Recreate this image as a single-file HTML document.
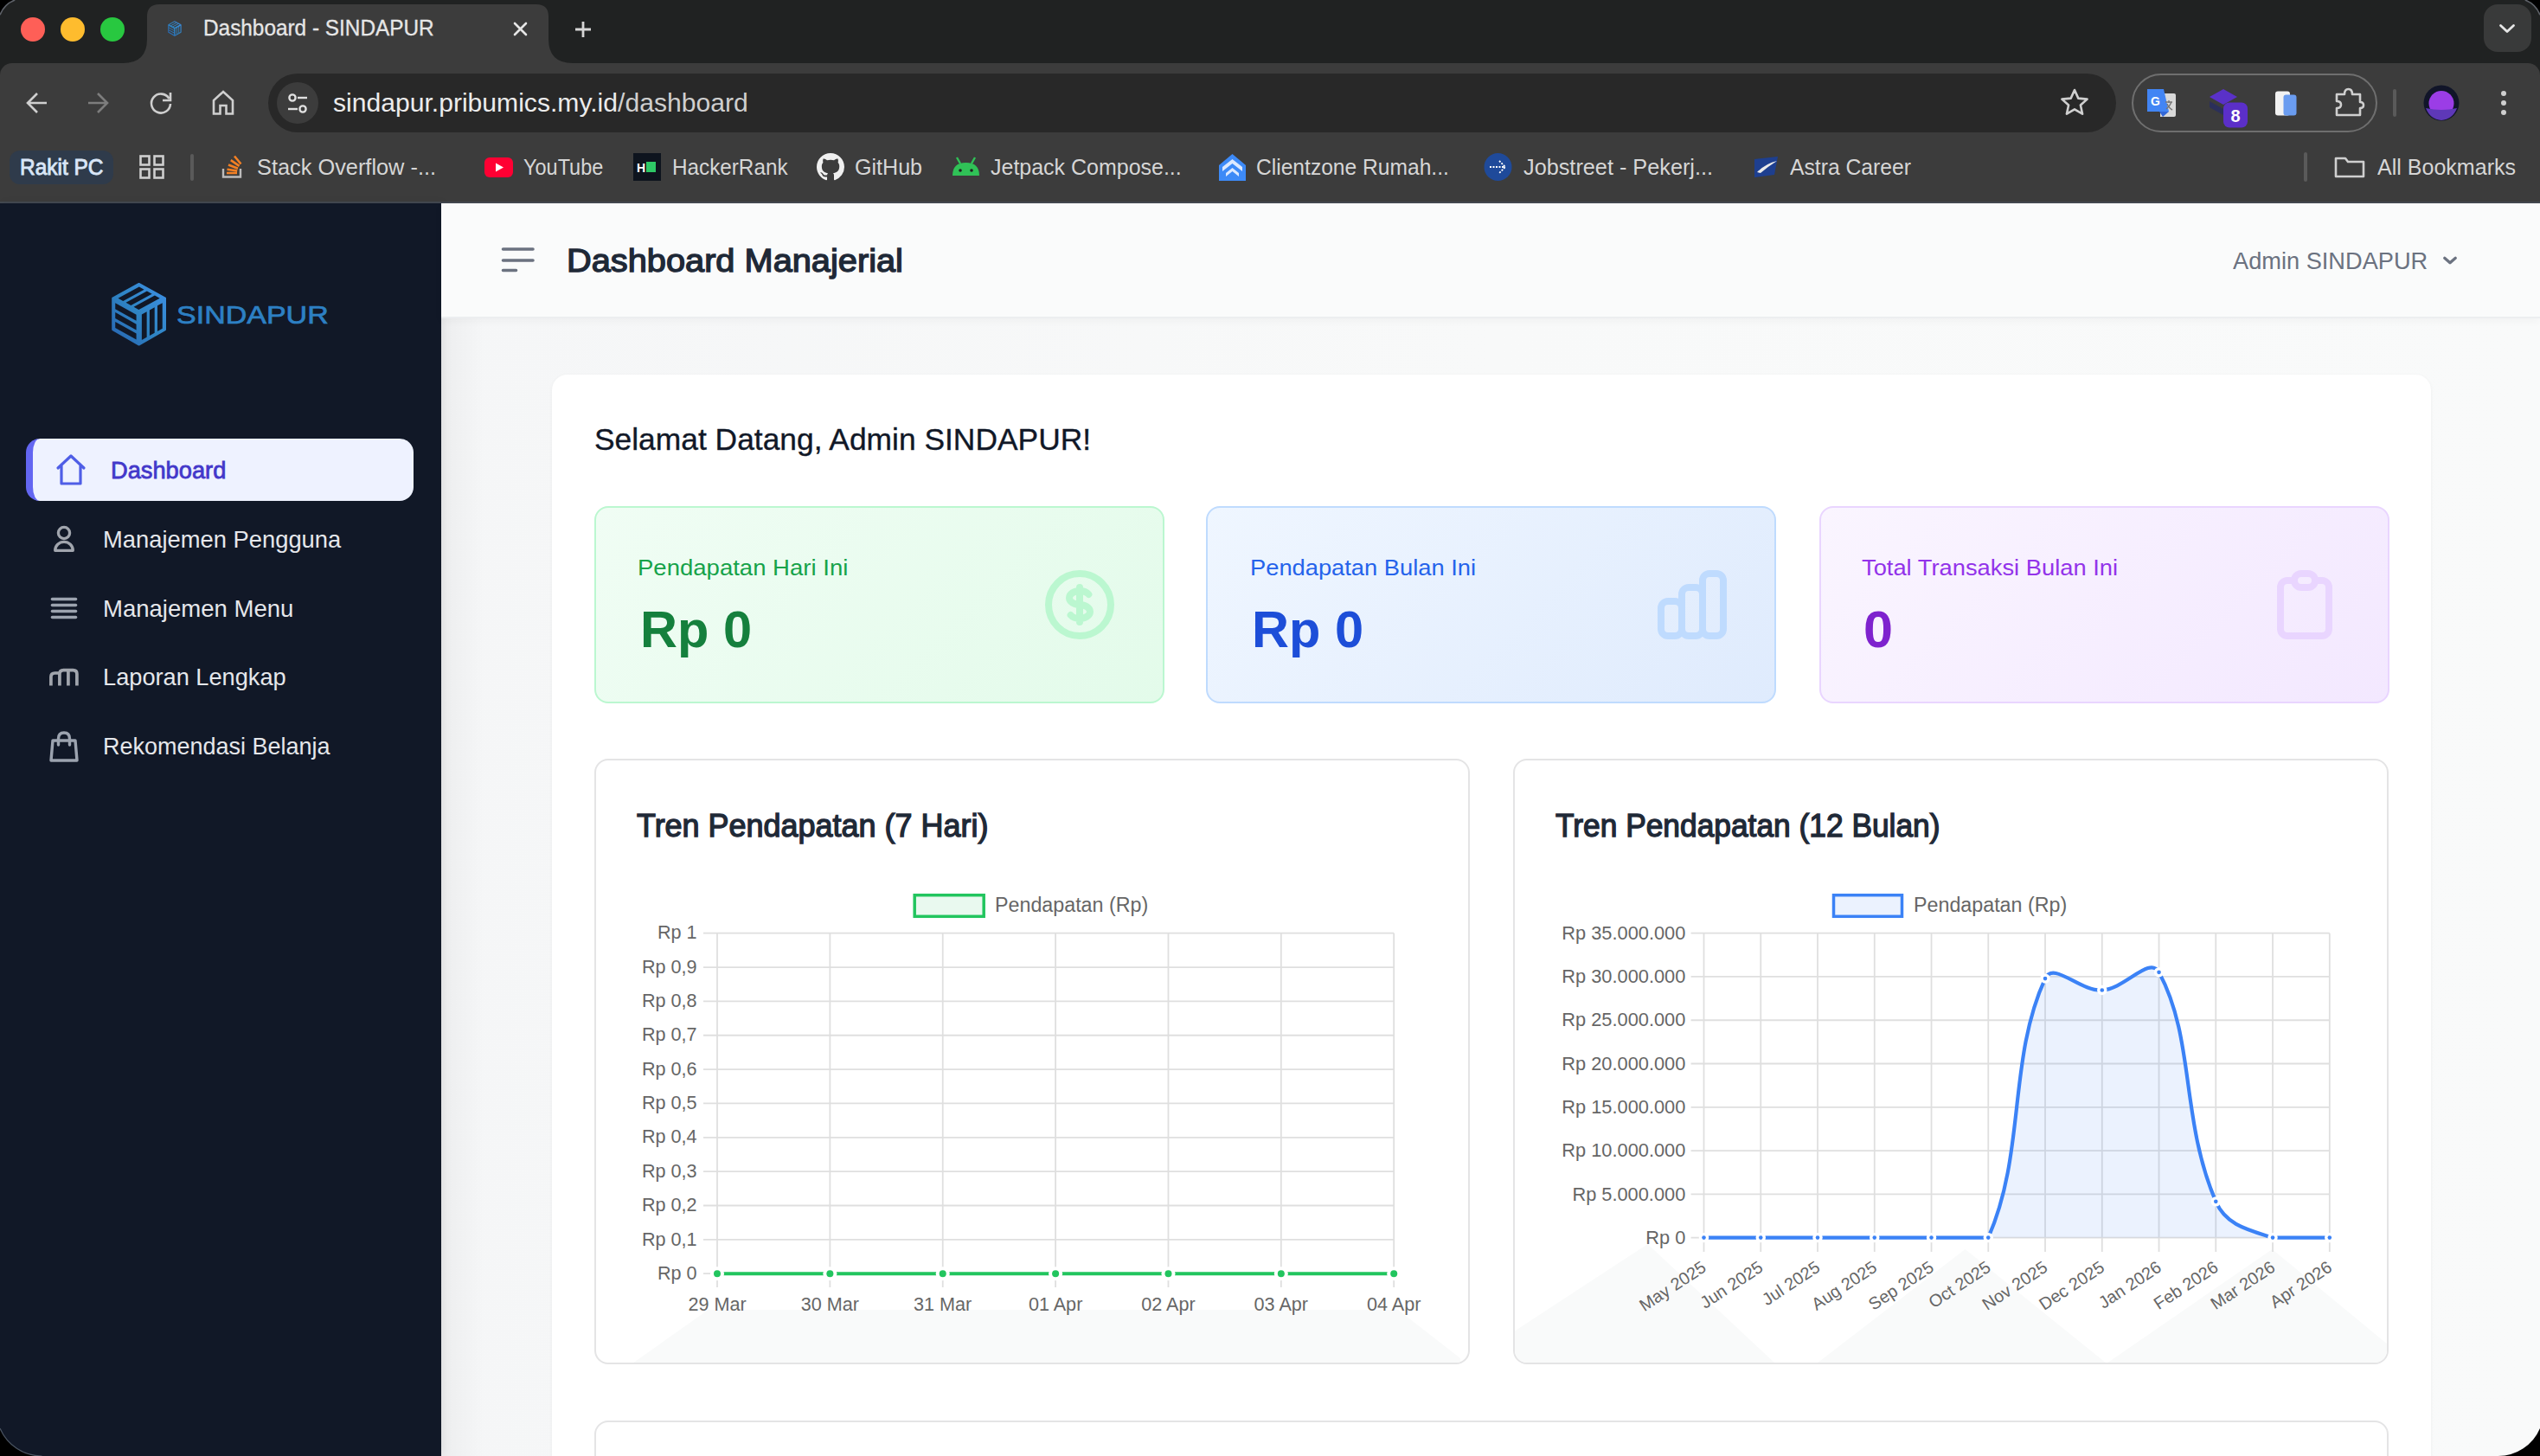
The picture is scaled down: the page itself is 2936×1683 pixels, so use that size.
<!DOCTYPE html>
<html><head><meta charset="utf-8"><title>Dashboard - SINDAPUR</title>
<style>
html,body{margin:0;padding:0;width:2936px;height:1683px;overflow:hidden;background:#000;}
#win{position:absolute;left:0;top:0;width:2936px;height:1683px;overflow:hidden;background:#202222;}
.t{position:absolute;white-space:nowrap;font-family:"Liberation Sans", sans-serif;}
.b{position:absolute;box-sizing:border-box;}
svg.b{overflow:visible;}
</style></head><body><div id="win">

<div class="b" style="left:0px;top:73px;width:2936px;height:162px;background:#3c3c3c;border-radius:14px 14px 0 0;"></div>
<div class="b" style="left:0px;top:233px;width:2936px;height:2px;background:#434850;"></div>
<svg class="b" style="left:142px;top:5px" width="520" height="68" viewBox="0 0 520 68"><path d="M0 68 Q28 68 28 40 L28 14 Q28 0 42 0 L478 0 Q492 0 492 14 L492 40 Q492 68 520 68 Z" fill="#3c3c3c"/></svg>
<div class="b" style="left:24px;top:20px;width:28px;height:28px;background:#fe5f57;border-radius:50%;"></div>
<div class="b" style="left:70px;top:20px;width:28px;height:28px;background:#febc2e;border-radius:50%;"></div>
<div class="b" style="left:116px;top:20px;width:28px;height:28px;background:#28c840;border-radius:50%;"></div>
<div class="t " style="left:235.0px;top:19.6px;font-size:25.00px;line-height:25.00px;color:#e6e6e6;-webkit-text-stroke:0.3px #e6e6e6;transform:scaleX(0.9744);transform-origin:left top;">Dashboard - SINDAPUR</div>
<svg class="b" style="left:594px;top:26px;" width="15" height="15" viewBox="0 0 15 15"><path d="M1 1 L14 14 M14 1 L1 14" stroke="#e6e6e6" stroke-width="2.6" stroke-linecap="round"/></svg>
<svg class="b" style="left:664px;top:24px;" width="20" height="20" viewBox="0 0 20 20"><path d="M10 1 V19 M1 10 H19" stroke="#d6d6d6" stroke-width="2.8"/></svg>
<div class="b" style="left:2871px;top:5px;width:55px;height:55px;background:#393a3a;border-radius:16px;"></div>
<svg class="b" style="left:2888px;top:26px;" width="20" height="14" viewBox="0 0 20 14"><path d="M2.5 3.5 L10 10.5 L17.5 3.5" stroke="#e6e6e6" stroke-width="2.8" fill="none" stroke-linecap="round" stroke-linejoin="round"/></svg>
<svg class="b" style="left:30px;top:106px;" width="25" height="26" viewBox="0 0 25 26"><path d="M24 13 H3 M13 2 L2 13 L13 24" stroke="#cfcfcf" stroke-width="2.6" fill="none"/></svg>
<svg class="b" style="left:101px;top:106px;" width="25" height="26" viewBox="0 0 25 26"><path d="M1 13 H22 M12 2 L23 13 L12 24" stroke="#7d7d7d" stroke-width="2.6" fill="none"/></svg>
<svg class="b" style="left:172px;top:105px;" width="28" height="28" viewBox="0 0 28 28"><path d="M23.5 9 A11 11 0 1 0 25 15" stroke="#cfcfcf" stroke-width="2.6" fill="none"/><path d="M25 2 V11 H16" stroke="#cfcfcf" stroke-width="2.6" fill="none"/></svg>
<svg class="b" style="left:245px;top:104px;" width="26" height="29" viewBox="0 0 26 29"><path d="M2 27.5 V12 L13 2 L24 12 V27.5 H16.5 V18 H9.5 V27.5 Z" stroke="#cfcfcf" stroke-width="2.6" fill="none" stroke-linejoin="miter"/></svg>
<div class="b" style="left:310px;top:85px;width:2136px;height:68px;background:#282828;border-radius:34px;"></div>
<div class="b" style="left:320px;top:95px;width:48px;height:48px;background:#3c3c3c;border-radius:50%;"></div>
<svg class="b" style="left:330px;top:105px;" width="28" height="28" viewBox="0 0 28 28"><circle cx="8" cy="8" r="3.6" stroke="#e0e0e0" stroke-width="2.4" fill="none"/><path d="M14 8 H25" stroke="#e0e0e0" stroke-width="2.4"/><circle cx="20" cy="21" r="3.6" stroke="#e0e0e0" stroke-width="2.4" fill="none"/><path d="M3 21 H14" stroke="#e0e0e0" stroke-width="2.4"/></svg>
<div class="t " style="left:385.0px;top:105.1px;font-size:29.00px;line-height:29.00px;color:#ececec;transform:scaleX(1.0380);transform-origin:left top;">sindapur.pribumics.my.id<span style="color:#cfcfcf">/dashboard</span></div>
<svg class="b" style="left:2381px;top:102px;" width="34" height="32" viewBox="0 0 34 32"><path d="M17 2 L21.3 11.6 L31.6 12.6 L23.9 19.5 L26.1 29.7 L17 24.4 L7.9 29.7 L10.1 19.5 L2.4 12.6 L12.7 11.6 Z" stroke="#cfcfcf" stroke-width="2.6" fill="none" stroke-linejoin="round"/></svg>
<div class="b" style="left:2464px;top:85px;width:284px;height:68px;border:2px solid #6f6f6f;border-radius:34px;"></div>
<svg class="b" style="left:2481px;top:102px;" width="35" height="34" viewBox="0 0 35 34"><path d="M16 6 H32 Q34 6 34 8 V31 Q34 33 32 33 H16 Z" fill="#d9d9d9"/><path d="M1 1 H20 L26 27 H1 Z" fill="#4285f4"/><path d="M15 27 L26 27 L19 33 Z" fill="#3367d6"/><text x="5" y="20" font-family="Liberation Sans" font-weight="700" font-size="14" fill="#fff">G</text><path d="M22 16 H30 M26 14 V17 M23 24 Q27 21 29 16 M24 18 Q26 23 30 25" stroke="#777" stroke-width="1.4" fill="none"/></svg>
<svg class="b" style="left:2552px;top:102px;" width="48" height="46" viewBox="0 0 48 46"><path d="M18 1 L34 10 L18 19 L2 10 Z" fill="#5a31c8"/><path d="M2 15 L18 24 L18 31 L2 22 Z" fill="#2b2f5a"/><rect x="18" y="16.5" width="28" height="29" rx="7" fill="#5b2fc9"/><text x="32" y="39" text-anchor="middle" font-family="Liberation Sans" font-weight="700" font-size="20" fill="#fff">8</text></svg>
<svg class="b" style="left:2628px;top:104px;" width="28" height="31" viewBox="0 0 28 31"><rect x="2" y="1.5" width="17" height="28" rx="3" fill="#f2f2f2"/><rect x="11.5" y="5.5" width="15" height="24" rx="3" fill="#6a9cf0"/></svg>
<svg class="b" style="left:2698px;top:100px;" width="36" height="35" viewBox="0 0 36 35"><path d="M3 9 H12 Q12 3 16.5 3 Q21 3 21 9 H30 V18 Q34 18 34 21.5 Q34 25 30 25 V33 H3 V25 Q8 25 8 21 Q8 17 3 17 Z" stroke="#cfcfcf" stroke-width="2.6" fill="none" stroke-linejoin="round"/></svg>
<div class="b" style="left:2766px;top:103px;width:4px;height:32px;background:#5a5a5a;border-radius:2px;"></div>
<svg class="b" style="left:2801px;top:98px;" width="42" height="42" viewBox="0 0 42 42"><circle cx="21" cy="21" r="20.5" fill="#111529"/><circle cx="21" cy="21.5" r="14.5" fill="#9b3de6"/><path d="M3 27 Q21 31 39 27 Q34 40 21 41 Q8 40 3 27 Z" fill="#5e38b8"/></svg>
<div class="b" style="left:2891px;top:104.8px;width:6.400000000000091px;height:6.400000000000006px;background:#cfcfcf;border-radius:50%;"></div>
<div class="b" style="left:2891px;top:115.8px;width:6.400000000000091px;height:6.400000000000006px;background:#cfcfcf;border-radius:50%;"></div>
<div class="b" style="left:2891px;top:126.8px;width:6.400000000000091px;height:6.3999999999999915px;background:#cfcfcf;border-radius:50%;"></div>
<div class="b" style="left:11px;top:174px;width:120px;height:39px;background:#2f3b4b;border-radius:12px;"></div>
<div class="t " style="left:22.5px;top:180.0px;font-size:26.00px;line-height:26.00px;color:#d9e6f7;-webkit-text-stroke:0.9px #d9e6f7;transform:scaleX(0.9407);transform-origin:left top;">Rakit PC</div>
<svg class="b" style="left:161px;top:179px;" width="30" height="28" viewBox="0 0 30 28"><rect x="1.5" y="1.5" width="10" height="10" fill="none" stroke="#cfcfcf" stroke-width="2.6"/><rect x="1.5" y="16.5" width="10" height="10" fill="none" stroke="#cfcfcf" stroke-width="2.6"/><rect x="17.5" y="1.5" width="10" height="10" fill="none" stroke="#cfcfcf" stroke-width="2.6"/><rect x="17.5" y="16.5" width="10" height="10" fill="none" stroke="#cfcfcf" stroke-width="2.6"/></svg>
<div class="b" style="left:220px;top:178px;width:4px;height:31px;background:#5a5a5a;border-radius:2px;"></div>
<svg class="b" style="left:256px;top:177px;" width="25" height="30" viewBox="0 0 25 30"><path d="M2 18 V27.5 H22 V18" stroke="#bcbbbb" stroke-width="2.4" fill="none"/><path d="M6 23 H18 M6.5 18.8 L18.2 20.5 M8 13.5 L19 17.8 M10.8 8.2 L20.6 14.8 M15 3.5 L22.5 12.5" stroke="#f48024" stroke-width="2.6"/></svg>
<div class="t " style="left:296.7px;top:180.0px;font-size:26.00px;line-height:26.00px;color:#d6d6d6;transform:scaleX(0.9747);transform-origin:left top;">Stack Overflow -...</div>
<svg class="b" style="left:560px;top:182px;" width="33" height="23" viewBox="0 0 33 23"><rect x="0" y="0" width="33" height="23" rx="6" fill="#ff0033"/><path d="M13 6.5 L22 11.5 L13 16.5 Z" fill="#fff"/></svg>
<div class="t " style="left:605.0px;top:180.0px;font-size:26.00px;line-height:26.00px;color:#d6d6d6;transform:scaleX(0.9034);transform-origin:left top;">YouTube</div>
<svg class="b" style="left:732px;top:177px;" width="32" height="32" viewBox="0 0 32 32"><rect width="32" height="32" fill="#0e141e"/><text x="4" y="22" font-family="Liberation Sans" font-weight="700" font-size="14" fill="#fff">H</text><rect x="15" y="10" width="11" height="12" fill="#2ec866"/></svg>
<div class="t " style="left:776.5px;top:180.0px;font-size:26.00px;line-height:26.00px;color:#d6d6d6;transform:scaleX(0.9333);transform-origin:left top;">HackerRank</div>
<svg class="b" style="left:944px;top:177px;" width="32" height="32" viewBox="0 0 16 16"><path fill="#f0f0f0" d="M8 0C3.58 0 0 3.58 0 8c0 3.54 2.29 6.53 5.47 7.59.4.07.55-.17.55-.38 0-.19-.01-.82-.01-1.49-2.01.37-2.53-.49-2.69-.94-.09-.23-.48-.94-.82-1.13-.28-.15-.68-.52-.01-.53.63-.01 1.08.58 1.23.82.72 1.21 1.87.87 2.330.66.07-.52.28-.87.51-1.07-1.78-.2-3.64-.89-3.64-3.95 0-.87.31-1.59.82-2.15-.08-.2-.36-1.02.08-2.12 0 0 .67-.21 2.2.82.64-.18 1.32-.27 2-.27.68 0 1.36.09 2 .27 1.53-1.04 2.2-.82 2.2-.82.44 1.1.16 1.92.08 2.12.51.56.82 1.27.82 2.15 0 3.07-1.87 3.75-3.65 3.95.29.25.54.73.54 1.480 0 1.07-.01 1.93-.01 2.2 0 .21.15.46.55.38A8.013 8.013 0 0016 8c0-4.42-3.58-8-8-8z"/></svg>
<div class="t " style="left:988.0px;top:180.0px;font-size:26.00px;line-height:26.00px;color:#d6d6d6;transform:scaleX(0.9640);transform-origin:left top;">GitHub</div>
<svg class="b" style="left:1100px;top:180px;" width="33" height="24" viewBox="0 0 33 24"><path d="M1 23 Q1 8 16.5 8 Q32 8 32 23 Z" fill="#30c257"/><path d="M6 2 L10 9 M27 2 L23 9" stroke="#30c257" stroke-width="2.4"/><circle cx="10" cy="17" r="1.8" fill="#202020"/><circle cx="23" cy="17" r="1.8" fill="#202020"/></svg>
<div class="t " style="left:1145.0px;top:180.0px;font-size:26.00px;line-height:26.00px;color:#d6d6d6;transform:scaleX(0.9606);transform-origin:left top;">Jetpack Compose...</div>
<svg class="b" style="left:1408px;top:176px;" width="33" height="34" viewBox="0 0 33 34"><path d="M16.5 2 L32 15 V33 H1 V15 Z" fill="#3d8af7"/><path d="M5 17 L16.5 8 L28 17 V22 L16.5 13 L5 22 Z" fill="#dce9ff"/><path d="M9 24 L16.5 18 L24 24 V28 L16.5 22 L9 28 Z" fill="#dce9ff"/></svg>
<div class="t " style="left:1452.0px;top:180.0px;font-size:26.00px;line-height:26.00px;color:#d6d6d6;transform:scaleX(0.9459);transform-origin:left top;">Clientzone Rumah...</div>
<svg class="b" style="left:1715px;top:177px;" width="33" height="32" viewBox="0 0 33 32"><circle cx="16.5" cy="16" r="16" fill="#1f4a9a"/><path d="M7 16 H25 M18 9 L25 16 L18 23" stroke="#ffffff" stroke-width="1.8" fill="none" stroke-dasharray="2 1.5"/></svg>
<div class="t " style="left:1761.0px;top:180.0px;font-size:26.00px;line-height:26.00px;color:#d6d6d6;transform:scaleX(0.9716);transform-origin:left top;">Jobstreet - Pekerj...</div>
<svg class="b" style="left:2027px;top:180px;" width="29" height="26" viewBox="0 0 29 26"><path d="M1 4 L28 1 L24 22 L1 25 Z" fill="#1e3f8f"/><path d="M4 19 Q14 9 27 6 Q16 13 8 20 Z" fill="#eaeaea"/></svg>
<div class="t " style="left:2069.0px;top:180.0px;font-size:26.00px;line-height:26.00px;color:#d6d6d6;transform:scaleX(0.9500);transform-origin:left top;">Astra Career</div>
<div class="b" style="left:2663px;top:176px;width:4px;height:34px;background:#5a5a5a;border-radius:2px;"></div>
<svg class="b" style="left:2698px;top:180px;" width="36" height="26" viewBox="0 0 36 26"><path d="M2 3 H13 L16 7 H34 V24 H2 Z" stroke="#cfcfcf" stroke-width="2.6" fill="none" stroke-linejoin="round"/></svg>
<div class="t " style="left:2748.0px;top:180.0px;font-size:26.00px;line-height:26.00px;color:#d6d6d6;transform:scaleX(0.9630);transform-origin:left top;">All Bookmarks</div>
<div class="b" style="left:510px;top:235px;width:2426px;height:1448px;background:linear-gradient(to right,#f5f6f7,#f8f9f9 50%,#f9fafa);"></div>
<div class="b" style="left:510px;top:235px;width:50px;height:1448px;background:linear-gradient(to right,rgba(0,0,0,0.035),rgba(0,0,0,0));"></div>
<div class="b" style="left:0px;top:235px;width:510px;height:1448px;background:#111827;box-shadow:3px 0 10px rgba(0,0,0,0.06);"></div>
<div class="b" style="left:510px;top:235px;width:2426px;height:133px;background:#fafbfb;border-bottom:2px solid #eceef0;box-shadow:0 3px 10px rgba(0,0,0,0.035);"></div>
<svg class="b" style="left:124px;top:322px;" width="74" height="82" viewBox="0 0 74 82"><defs><linearGradient id="lg" x1="1" y1="0" x2="0" y2="1"><stop offset="0" stop-color="#3d8fe6"/><stop offset="0.5" stop-color="#2f85c4"/><stop offset="1" stop-color="#2763b0"/></linearGradient></defs><path d="M36.6 5.9 L67 22.6 L67 59.1 L36.6 76.6 L6.2 59.1 L6.2 22.6 Z" fill="url(#lg)" stroke="url(#lg)" stroke-width="2" stroke-linejoin="round"/><path d="M12.51 22.76 L36.83 9.40 L42.60 12.63 L18.28 25.99 Z M9.24 28.22 L33.56 41.82 L33.56 48.76 L9.24 35.16 Z M39.87 41.47 L45.64 38.24 L45.64 67.84 L39.87 71.07 Z M21.55 27.82 L45.87 14.45 L51.65 17.68 L27.33 31.05 Z M9.24 39.08 L33.56 52.68 L33.56 59.62 L9.24 46.02 Z M48.91 36.42 L54.69 33.19 L54.69 62.78 L48.91 66.02 Z M30.60 32.87 L54.92 19.51 L60.69 22.74 L36.37 36.10 Z M9.24 49.94 L33.56 63.54 L33.56 70.48 L9.24 56.88 Z M57.96 31.36 L63.73 28.13 L63.73 57.73 L57.96 60.96 Z" fill="#111827"/></svg>
<svg class="b" style="left:192px;top:23px;" width="20" height="20" viewBox="0 0 74 82"><defs><linearGradient id="lg2" x1="1" y1="0" x2="0" y2="1"><stop offset="0" stop-color="#3d8fe6"/><stop offset="0.5" stop-color="#2f85c4"/><stop offset="1" stop-color="#2763b0"/></linearGradient></defs><path d="M36.6 5.9 L67 22.6 L67 59.1 L36.6 76.6 L6.2 59.1 L6.2 22.6 Z" fill="url(#lg2)" stroke="url(#lg2)" stroke-width="2" stroke-linejoin="round"/><path d="M12.51 22.76 L36.83 9.40 L42.60 12.63 L18.28 25.99 Z M9.24 28.22 L33.56 41.82 L33.56 48.76 L9.24 35.16 Z M39.87 41.47 L45.64 38.24 L45.64 67.84 L39.87 71.07 Z M21.55 27.82 L45.87 14.45 L51.65 17.68 L27.33 31.05 Z M9.24 39.08 L33.56 52.68 L33.56 59.62 L9.24 46.02 Z M48.91 36.42 L54.69 33.19 L54.69 62.78 L48.91 66.02 Z M30.60 32.87 L54.92 19.51 L60.69 22.74 L36.37 36.10 Z M9.24 49.94 L33.56 63.54 L33.56 70.48 L9.24 56.88 Z M57.96 31.36 L63.73 28.13 L63.73 57.73 L57.96 60.96 Z" fill="#3c3c3c"/></svg>
<div class="t " style="left:203.6px;top:348.3px;font-size:30.40px;line-height:30.40px;color:#2d80c4;-webkit-text-stroke:0.7px #2d80c4;transform:scaleX(1.1191);transform-origin:left top;">SINDAPUR</div>
<div class="b" style="left:30px;top:507px;width:448px;height:72px;background:#eef2ff;border-radius:16px;border-left:8px solid #6366f1;"></div>
<svg class="b" style="left:63px;top:524px;" width="38" height="38" viewBox="0 0 38 38"><path d="M4 17 L19 3 L34 17 M8 13.5 V35 H30 V13.5" stroke="#4f5ee6" stroke-width="3.2" fill="none" stroke-linejoin="round" stroke-linecap="round"/></svg>
<div class="t " style="left:127.7px;top:529.7px;font-size:28.00px;line-height:28.00px;color:#4338ca;-webkit-text-stroke:0.8px #4338ca;transform:scaleX(0.9732);transform-origin:left top;">Dashboard</div>
<div class="t " style="left:119.3px;top:609.9px;font-size:28.00px;line-height:28.00px;color:#e5e7eb;transform:scaleX(0.9768);transform-origin:left top;">Manajemen Pengguna</div>
<div class="t " style="left:119.3px;top:689.6px;font-size:28.00px;line-height:28.00px;color:#e5e7eb;transform:scaleX(0.9830);transform-origin:left top;">Manajemen Menu</div>
<div class="t " style="left:119.3px;top:769.4px;font-size:28.00px;line-height:28.00px;color:#e5e7eb;transform:scaleX(0.9713);transform-origin:left top;">Laporan Lengkap</div>
<div class="t " style="left:119.3px;top:849.2px;font-size:28.00px;line-height:28.00px;color:#e5e7eb;transform:scaleX(0.9641);transform-origin:left top;">Rekomendasi Belanja</div>
<svg class="b" style="left:60px;top:606px;" width="28" height="34" viewBox="0 0 28 34"><circle cx="14" cy="10" r="6.6" stroke="#a1a5ad" stroke-width="3.3" fill="none"/><path d="M3.7 30.3 A10.3 10 0 0 1 24.3 30.3 Z" stroke="#a1a5ad" stroke-width="3.3" fill="none" stroke-linejoin="round"/></svg>
<svg class="b" style="left:58px;top:689px;" width="32" height="28" viewBox="0 0 32 28"><path d="M2.5 3.5 H29.5" stroke="#9ca3af" stroke-width="3.6" stroke-linecap="round"/><path d="M2.5 10.5 H29.5" stroke="#9ca3af" stroke-width="3.6" stroke-linecap="round"/><path d="M2.5 17.5 H29.5" stroke="#9ca3af" stroke-width="3.6" stroke-linecap="round"/><path d="M2.5 24.5 H29.5" stroke="#9ca3af" stroke-width="3.6" stroke-linecap="round"/></svg>
<svg class="b" style="left:55px;top:771px;" width="40" height="24" viewBox="0 0 40 24"><path d="M3.9 21.4 V11.5 Q3.9 7 8.4 7 H13.9 M13.9 21.4 V8.1 Q13.9 3.6 18.4 3.6 H29.4 Q33.9 3.6 33.9 8.1 V21.4 M23.9 3.6 V21.4" stroke="#a1a5ad" stroke-width="3.7" fill="none" stroke-linecap="butt"/></svg>
<svg class="b" style="left:57px;top:845px;" width="34" height="36" viewBox="0 0 34 36"><path d="M4 11 H30 L32 34 H2 Z" stroke="#9ca3af" stroke-width="3.4" fill="none" stroke-linejoin="round"/><path d="M10.5 16 V9 Q10.5 2 17 2 Q23.5 2 23.5 9 V16" stroke="#9ca3af" stroke-width="3.4" fill="none" stroke-linecap="round"/></svg>
<svg class="b" style="left:576px;top:284px;" width="44" height="34" viewBox="0 0 44 34"><path d="M5.5 4 H40 M5.5 17 H40 M5.5 28.5 H20.5" stroke="#6b7280" stroke-width="3.6" stroke-linecap="round"/></svg>
<div class="t " style="left:655.0px;top:283.1px;font-size:37.70px;line-height:37.70px;color:#1f2937;-webkit-text-stroke:1.4px #1f2937;transform:scaleX(1.0548);transform-origin:left top;">Dashboard Manajerial</div>
<div class="t " style="left:2581.0px;top:287.5px;font-size:28.00px;line-height:28.00px;color:#6b7280;transform:scaleX(0.9714);transform-origin:left top;">Admin SINDAPUR</div>
<svg class="b" style="left:2821px;top:293px;" width="22" height="16" viewBox="0 0 22 16"><path d="M4.7 5.2 L11 10.8 L17.3 5.2" stroke="#6b7280" stroke-width="3.2" fill="none" stroke-linecap="round" stroke-linejoin="round"/></svg>
<div class="b" style="left:638px;top:433px;width:2172px;height:1290px;background:#ffffff;border-radius:18px;box-shadow:0 1px 4px rgba(0,0,0,0.05);"></div>
<div class="t " style="left:687.4px;top:491.2px;font-size:35.60px;line-height:35.60px;color:#111827;-webkit-text-stroke:0.35px #111827;transform:scaleX(0.9942);transform-origin:left top;">Selamat Datang, Admin SINDAPUR!</div>
<div class="b" style="left:687px;top:585px;width:659px;height:228px;background:linear-gradient(135deg,#f0fdf4,#e3fbea);border:2px solid #bbf7d0;border-radius:16px;"></div>
<div class="t " style="left:737.0px;top:642.6px;font-size:26.50px;line-height:26.50px;color:#16a34a;transform:scaleX(1.0387);transform-origin:left top;">Pendapatan Hari Ini</div>
<div class="t " style="left:739.6px;top:699.0px;font-size:58.50px;line-height:58.50px;color:#15803d;font-weight:700;transform:scaleX(1.0177);transform-origin:left top;">Rp 0</div>
<div class="b" style="left:1394px;top:585px;width:659px;height:228px;background:linear-gradient(135deg,#eff6ff,#dfebfd);border:2px solid #bfdbfe;border-radius:16px;"></div>
<div class="t " style="left:1445.2px;top:642.6px;font-size:26.50px;line-height:26.50px;color:#2563eb;transform:scaleX(1.0299);transform-origin:left top;">Pendapatan Bulan Ini</div>
<div class="t " style="left:1447.3px;top:699.0px;font-size:58.50px;line-height:58.50px;color:#1d4ed8;font-weight:700;transform:scaleX(1.0177);transform-origin:left top;">Rp 0</div>
<div class="b" style="left:2103px;top:585px;width:659px;height:228px;background:linear-gradient(135deg,#faf5ff,#f3e8ff);border:2px solid #e9d5ff;border-radius:16px;"></div>
<div class="t " style="left:2151.8px;top:642.6px;font-size:26.50px;line-height:26.50px;color:#9333ea;transform:scaleX(1.0306);transform-origin:left top;">Total Transaksi Bulan Ini</div>
<div class="t " style="left:2154.2px;top:699.0px;font-size:58.50px;line-height:58.50px;color:#7e22ce;font-weight:700;transform:scaleX(1.0451);transform-origin:left top;">0</div>
<svg class="b" style="left:1200px;top:650.6px;" width="96" height="96.0" viewBox="0 0 24 24"><g fill="none" stroke-width="2" stroke-linecap="round" stroke-linejoin="round" stroke="#bbf7d0"><path d="M12 8c-1.657 0-3 .895-3 2s1.343 2 3 2 3 .895 3 2-1.343 2-3 2m0-8c1.11 0 2.08.402 2.599 1M12 8V7m0 1v8m0 0v1m0-1c-1.11 0-2.08-.402-2.599-1M21 12a9 9 0 11-18 0 9 9 0 0118 0z"/></g></svg>
<svg class="b" style="left:1908px;top:651px;" width="96" height="96" viewBox="0 0 24 24"><g fill="none" stroke-width="2" stroke-linecap="round" stroke-linejoin="round" stroke="#bfdbfe"><path d="M9 19v-6a2 2 0 00-2-2H5a2 2 0 00-2 2v6a2 2 0 002 2h2a2 2 0 002-2zm0 0V9a2 2 0 012-2h2a2 2 0 012 2v10m-6 0a2 2 0 002 2h2a2 2 0 002-2m0 0V5a2 2 0 012-2h2a2 2 0 012 2v14a2 2 0 01-2 2h-2a2 2 0 01-2-2z"/></g></svg>
<svg class="b" style="left:2616px;top:651px;" width="96" height="96" viewBox="0 0 24 24"><g fill="none" stroke-width="2" stroke-linecap="round" stroke-linejoin="round" stroke="#e9d5ff"><path d="M9 5H7a2 2 0 00-2 2v12a2 2 0 002 2h10a2 2 0 002-2V7a2 2 0 00-2-2h-2M9 5a2 2 0 002 2h2a2 2 0 002-2M9 5a2 2 0 012-2h2a2 2 0 012 2"/></g></svg>
<div class="b" style="left:687px;top:877px;width:1012px;height:700px;background:#fff;border:2px solid #e4e4e5;border-radius:16px;"></div>
<div class="t " style="left:736.4px;top:936.1px;font-size:37.30px;line-height:37.30px;color:#1f2937;-webkit-text-stroke:1.4px #1f2937;transform:scaleX(0.9643);transform-origin:left top;">Tren Pendapatan (7 Hari)</div>
<div class="b" style="left:1749px;top:877px;width:1012px;height:700px;background:#fff;border:2px solid #e4e4e5;border-radius:16px;"></div>
<div class="t " style="left:1798.4px;top:936.1px;font-size:37.30px;line-height:37.30px;color:#1f2937;-webkit-text-stroke:1.4px #1f2937;transform:scaleX(0.9472);transform-origin:left top;">Tren Pendapatan (12 Bulan)</div>
<div class="b" style="left:687px;top:1642px;width:2074px;height:81px;background:#fff;border:2px solid #e4e4e5;border-radius:16px;"></div>
<svg class="b" style="left:0;top:0" width="2936" height="1683" viewBox="0 0 2936 1683"><defs><clipPath id="cc1"><rect x="689" y="879" width="1008" height="696" rx="14"/></clipPath><clipPath id="cc2"><rect x="1751" y="879" width="1008" height="696" rx="14"/></clipPath></defs><path clip-path="url(#cc1)" d="M731 1576 L818.6 1514 L1616 1514 L1688 1570 L1688 1576 Z" fill="#f9fafa"/><path clip-path="url(#cc2)" d="M1749 1576 L1749 1539.7 L1904.6 1438 L2052 1576 Z M2100 1576 L2271.5 1444 L2435 1576 Z M2435 1576 L2626.5 1444 L2762 1555.7 L2762 1576 Z" fill="#f9fafa"/></svg>
<svg class="b" style="left:0;top:0" width="2936" height="1683" viewBox="0 0 2936 1683"><path d="M813 1472.20 H1611.2" stroke="#dfdfdf" stroke-width="1.8"/><path d="M813 1432.85 H1611.2" stroke="#dfdfdf" stroke-width="1.8"/><path d="M813 1393.50 H1611.2" stroke="#dfdfdf" stroke-width="1.8"/><path d="M813 1354.15 H1611.2" stroke="#dfdfdf" stroke-width="1.8"/><path d="M813 1314.80 H1611.2" stroke="#dfdfdf" stroke-width="1.8"/><path d="M813 1275.45 H1611.2" stroke="#dfdfdf" stroke-width="1.8"/><path d="M813 1236.10 H1611.2" stroke="#dfdfdf" stroke-width="1.8"/><path d="M813 1196.75 H1611.2" stroke="#dfdfdf" stroke-width="1.8"/><path d="M813 1157.40 H1611.2" stroke="#dfdfdf" stroke-width="1.8"/><path d="M813 1118.05 H1611.2" stroke="#dfdfdf" stroke-width="1.8"/><path d="M813 1078.70 H1611.2" stroke="#dfdfdf" stroke-width="1.8"/><path d="M829.00 1078.7 V1488" stroke="#dfdfdf" stroke-width="1.8"/><path d="M959.37 1078.7 V1488" stroke="#dfdfdf" stroke-width="1.8"/><path d="M1089.73 1078.7 V1488" stroke="#dfdfdf" stroke-width="1.8"/><path d="M1220.10 1078.7 V1488" stroke="#dfdfdf" stroke-width="1.8"/><path d="M1350.47 1078.7 V1488" stroke="#dfdfdf" stroke-width="1.8"/><path d="M1480.83 1078.7 V1488" stroke="#dfdfdf" stroke-width="1.8"/><path d="M1611.20 1078.7 V1488" stroke="#dfdfdf" stroke-width="1.8"/><path d="M829 1472.2 H1611.2" stroke="#22c55e" stroke-width="4"/><circle cx="829.00" cy="1472.2" r="8" fill="#fff"/><circle cx="829.00" cy="1472.2" r="4" fill="#22c55e"/><circle cx="959.37" cy="1472.2" r="8" fill="#fff"/><circle cx="959.37" cy="1472.2" r="4" fill="#22c55e"/><circle cx="1089.73" cy="1472.2" r="8" fill="#fff"/><circle cx="1089.73" cy="1472.2" r="4" fill="#22c55e"/><circle cx="1220.10" cy="1472.2" r="8" fill="#fff"/><circle cx="1220.10" cy="1472.2" r="4" fill="#22c55e"/><circle cx="1350.47" cy="1472.2" r="8" fill="#fff"/><circle cx="1350.47" cy="1472.2" r="4" fill="#22c55e"/><circle cx="1480.83" cy="1472.2" r="8" fill="#fff"/><circle cx="1480.83" cy="1472.2" r="4" fill="#22c55e"/><circle cx="1611.20" cy="1472.2" r="8" fill="#fff"/><circle cx="1611.20" cy="1472.2" r="4" fill="#22c55e"/><rect x="1057.2" y="1034.7" width="80" height="24.6" fill="#e9f9ef" stroke="#22c55e" stroke-width="3.5"/></svg>
<div class="t " style="left:1150.4px;top:1035.2px;font-size:23.50px;line-height:23.50px;color:#666666;transform:scaleX(0.9901);transform-origin:left top;">Pendapatan (Rp)</div>
<div class="t " style="left:759.9px;top:1067.3px;font-size:21.60px;line-height:21.60px;color:#666666;">Rp 1</div>
<div class="t " style="left:741.9px;top:1106.7px;font-size:21.60px;line-height:21.60px;color:#666666;">Rp 0,9</div>
<div class="t " style="left:741.9px;top:1146.0px;font-size:21.60px;line-height:21.60px;color:#666666;">Rp 0,8</div>
<div class="t " style="left:741.9px;top:1185.4px;font-size:21.60px;line-height:21.60px;color:#666666;">Rp 0,7</div>
<div class="t " style="left:741.9px;top:1224.7px;font-size:21.60px;line-height:21.60px;color:#666666;">Rp 0,6</div>
<div class="t " style="left:741.9px;top:1264.1px;font-size:21.60px;line-height:21.60px;color:#666666;">Rp 0,5</div>
<div class="t " style="left:741.9px;top:1303.4px;font-size:21.60px;line-height:21.60px;color:#666666;">Rp 0,4</div>
<div class="t " style="left:741.9px;top:1342.8px;font-size:21.60px;line-height:21.60px;color:#666666;">Rp 0,3</div>
<div class="t " style="left:741.9px;top:1382.1px;font-size:21.60px;line-height:21.60px;color:#666666;">Rp 0,2</div>
<div class="t " style="left:741.9px;top:1421.5px;font-size:21.60px;line-height:21.60px;color:#666666;">Rp 0,1</div>
<div class="t " style="left:759.9px;top:1460.8px;font-size:21.60px;line-height:21.60px;color:#666666;">Rp 0</div>
<div class="t " style="left:795.4px;top:1496.5px;font-size:21.60px;line-height:21.60px;color:#666666;">29 Mar</div>
<div class="t " style="left:925.8px;top:1496.5px;font-size:21.60px;line-height:21.60px;color:#666666;">30 Mar</div>
<div class="t " style="left:1056.1px;top:1496.5px;font-size:21.60px;line-height:21.60px;color:#666666;">31 Mar</div>
<div class="t " style="left:1188.9px;top:1496.5px;font-size:21.60px;line-height:21.60px;color:#666666;">01 Apr</div>
<div class="t " style="left:1319.2px;top:1496.5px;font-size:21.60px;line-height:21.60px;color:#666666;">02 Apr</div>
<div class="t " style="left:1449.6px;top:1496.5px;font-size:21.60px;line-height:21.60px;color:#666666;">03 Apr</div>
<div class="t " style="left:1580.0px;top:1496.5px;font-size:21.60px;line-height:21.60px;color:#666666;">04 Apr</div>
<svg class="b" style="left:0;top:0" width="2936" height="1683" viewBox="0 0 2936 1683"><path d="M1954.6 1430.60 H2692.8" stroke="#dfdfdf" stroke-width="1.8"/><path d="M1954.6 1380.33 H2692.8" stroke="#dfdfdf" stroke-width="1.8"/><path d="M1954.6 1330.06 H2692.8" stroke="#dfdfdf" stroke-width="1.8"/><path d="M1954.6 1279.79 H2692.8" stroke="#dfdfdf" stroke-width="1.8"/><path d="M1954.6 1229.51 H2692.8" stroke="#dfdfdf" stroke-width="1.8"/><path d="M1954.6 1179.24 H2692.8" stroke="#dfdfdf" stroke-width="1.8"/><path d="M1954.6 1128.97 H2692.8" stroke="#dfdfdf" stroke-width="1.8"/><path d="M1954.6 1078.70 H2692.8" stroke="#dfdfdf" stroke-width="1.8"/><path d="M1969.50 1078.7 V1447" stroke="#dfdfdf" stroke-width="1.8"/><path d="M2035.25 1078.7 V1447" stroke="#dfdfdf" stroke-width="1.8"/><path d="M2101.01 1078.7 V1447" stroke="#dfdfdf" stroke-width="1.8"/><path d="M2166.76 1078.7 V1447" stroke="#dfdfdf" stroke-width="1.8"/><path d="M2232.52 1078.7 V1447" stroke="#dfdfdf" stroke-width="1.8"/><path d="M2298.27 1078.7 V1447" stroke="#dfdfdf" stroke-width="1.8"/><path d="M2364.03 1078.7 V1447" stroke="#dfdfdf" stroke-width="1.8"/><path d="M2429.78 1078.7 V1447" stroke="#dfdfdf" stroke-width="1.8"/><path d="M2495.54 1078.7 V1447" stroke="#dfdfdf" stroke-width="1.8"/><path d="M2561.29 1078.7 V1447" stroke="#dfdfdf" stroke-width="1.8"/><path d="M2627.05 1078.7 V1447" stroke="#dfdfdf" stroke-width="1.8"/><path d="M2692.80 1078.7 V1447" stroke="#dfdfdf" stroke-width="1.8"/><path d="M1969.50 1430.60 C1995.80 1430.60 2008.95 1430.60 2035.25 1430.60 C2061.56 1430.60 2074.71 1430.60 2101.01 1430.60 C2127.31 1430.60 2140.46 1430.60 2166.76 1430.60 C2193.07 1430.60 2206.22 1430.60 2232.52 1430.60 C2258.82 1430.60 2288.98 1430.60 2298.27 1430.60 C2341.59 1331.95 2320.87 1224.95 2364.03 1131.08 C2373.47 1110.54 2403.83 1145.98 2429.78 1144.56 C2456.44 1143.09 2484.93 1104.14 2495.54 1123.84 C2537.54 1201.87 2520.36 1293.40 2561.29 1388.87 C2572.96 1416.10 2598.52 1421.55 2627.05 1430.60 C2651.13 1430.60 2666.50 1430.60 2692.80 1430.60 L2692.8 1430.6 L1969.5 1430.6 Z" fill="rgba(59,130,246,0.1)"/><path d="M1969.50 1430.60 C1995.80 1430.60 2008.95 1430.60 2035.25 1430.60 C2061.56 1430.60 2074.71 1430.60 2101.01 1430.60 C2127.31 1430.60 2140.46 1430.60 2166.76 1430.60 C2193.07 1430.60 2206.22 1430.60 2232.52 1430.60 C2258.82 1430.60 2288.98 1430.60 2298.27 1430.60 C2341.59 1331.95 2320.87 1224.95 2364.03 1131.08 C2373.47 1110.54 2403.83 1145.98 2429.78 1144.56 C2456.44 1143.09 2484.93 1104.14 2495.54 1123.84 C2537.54 1201.87 2520.36 1293.40 2561.29 1388.87 C2572.96 1416.10 2598.52 1421.55 2627.05 1430.60 C2651.13 1430.60 2666.50 1430.60 2692.80 1430.60" stroke="#3b82f6" stroke-width="4.2" fill="none"/><circle cx="1969.50" cy="1430.60" r="5.7" fill="#fff"/><circle cx="1969.50" cy="1430.60" r="2.3" fill="#3b82f6"/><circle cx="2035.25" cy="1430.60" r="5.7" fill="#fff"/><circle cx="2035.25" cy="1430.60" r="2.3" fill="#3b82f6"/><circle cx="2101.01" cy="1430.60" r="5.7" fill="#fff"/><circle cx="2101.01" cy="1430.60" r="2.3" fill="#3b82f6"/><circle cx="2166.76" cy="1430.60" r="5.7" fill="#fff"/><circle cx="2166.76" cy="1430.60" r="2.3" fill="#3b82f6"/><circle cx="2232.52" cy="1430.60" r="5.7" fill="#fff"/><circle cx="2232.52" cy="1430.60" r="2.3" fill="#3b82f6"/><circle cx="2298.27" cy="1430.60" r="5.7" fill="#fff"/><circle cx="2298.27" cy="1430.60" r="2.3" fill="#3b82f6"/><circle cx="2364.03" cy="1131.08" r="5.7" fill="#fff"/><circle cx="2364.03" cy="1131.08" r="2.3" fill="#3b82f6"/><circle cx="2429.78" cy="1144.56" r="5.7" fill="#fff"/><circle cx="2429.78" cy="1144.56" r="2.3" fill="#3b82f6"/><circle cx="2495.54" cy="1123.84" r="5.7" fill="#fff"/><circle cx="2495.54" cy="1123.84" r="2.3" fill="#3b82f6"/><circle cx="2561.29" cy="1388.87" r="5.7" fill="#fff"/><circle cx="2561.29" cy="1388.87" r="2.3" fill="#3b82f6"/><circle cx="2627.05" cy="1430.60" r="5.7" fill="#fff"/><circle cx="2627.05" cy="1430.60" r="2.3" fill="#3b82f6"/><circle cx="2692.80" cy="1430.60" r="5.7" fill="#fff"/><circle cx="2692.80" cy="1430.60" r="2.3" fill="#3b82f6"/><rect x="2119.5" y="1034.7" width="79" height="24.6" fill="#ebf2fe" stroke="#3b82f6" stroke-width="3.5"/><text x="0" y="0" transform="translate(1970.70,1463.8) rotate(-33.5)" text-anchor="end" dominant-baseline="middle" font-family="Liberation Sans" font-size="19.9" fill="#666666">May 2025</text><text x="0" y="0" transform="translate(2036.45,1463.8) rotate(-33.5)" text-anchor="end" dominant-baseline="middle" font-family="Liberation Sans" font-size="19.9" fill="#666666">Jun 2025</text><text x="0" y="0" transform="translate(2102.21,1463.8) rotate(-33.5)" text-anchor="end" dominant-baseline="middle" font-family="Liberation Sans" font-size="19.9" fill="#666666">Jul 2025</text><text x="0" y="0" transform="translate(2167.96,1463.8) rotate(-33.5)" text-anchor="end" dominant-baseline="middle" font-family="Liberation Sans" font-size="19.9" fill="#666666">Aug 2025</text><text x="0" y="0" transform="translate(2233.72,1463.8) rotate(-33.5)" text-anchor="end" dominant-baseline="middle" font-family="Liberation Sans" font-size="19.9" fill="#666666">Sep 2025</text><text x="0" y="0" transform="translate(2299.47,1463.8) rotate(-33.5)" text-anchor="end" dominant-baseline="middle" font-family="Liberation Sans" font-size="19.9" fill="#666666">Oct 2025</text><text x="0" y="0" transform="translate(2365.23,1463.8) rotate(-33.5)" text-anchor="end" dominant-baseline="middle" font-family="Liberation Sans" font-size="19.9" fill="#666666">Nov 2025</text><text x="0" y="0" transform="translate(2430.98,1463.8) rotate(-33.5)" text-anchor="end" dominant-baseline="middle" font-family="Liberation Sans" font-size="19.9" fill="#666666">Dec 2025</text><text x="0" y="0" transform="translate(2496.74,1463.8) rotate(-33.5)" text-anchor="end" dominant-baseline="middle" font-family="Liberation Sans" font-size="19.9" fill="#666666">Jan 2026</text><text x="0" y="0" transform="translate(2562.49,1463.8) rotate(-33.5)" text-anchor="end" dominant-baseline="middle" font-family="Liberation Sans" font-size="19.9" fill="#666666">Feb 2026</text><text x="0" y="0" transform="translate(2628.25,1463.8) rotate(-33.5)" text-anchor="end" dominant-baseline="middle" font-family="Liberation Sans" font-size="19.9" fill="#666666">Mar 2026</text><text x="0" y="0" transform="translate(2694.00,1463.8) rotate(-33.5)" text-anchor="end" dominant-baseline="middle" font-family="Liberation Sans" font-size="19.9" fill="#666666">Apr 2026</text></svg>
<div class="t " style="left:2211.6px;top:1035.2px;font-size:23.50px;line-height:23.50px;color:#666666;transform:scaleX(0.9901);transform-origin:left top;">Pendapatan (Rp)</div>
<div class="t " style="left:1805.3px;top:1067.8px;font-size:21.80px;line-height:21.80px;color:#666666;">Rp 35.000.000</div>
<div class="t " style="left:1805.3px;top:1118.1px;font-size:21.80px;line-height:21.80px;color:#666666;">Rp 30.000.000</div>
<div class="t " style="left:1805.3px;top:1168.4px;font-size:21.80px;line-height:21.80px;color:#666666;">Rp 25.000.000</div>
<div class="t " style="left:1805.3px;top:1218.7px;font-size:21.80px;line-height:21.80px;color:#666666;">Rp 20.000.000</div>
<div class="t " style="left:1805.3px;top:1268.9px;font-size:21.80px;line-height:21.80px;color:#666666;">Rp 15.000.000</div>
<div class="t " style="left:1805.3px;top:1319.2px;font-size:21.80px;line-height:21.80px;color:#666666;">Rp 10.000.000</div>
<div class="t " style="left:1817.4px;top:1369.5px;font-size:21.80px;line-height:21.80px;color:#666666;">Rp 5.000.000</div>
<div class="t " style="left:1902.3px;top:1419.7px;font-size:21.80px;line-height:21.80px;color:#666666;">Rp 0</div>
<svg class="b" style="left:0;top:0;z-index:5" width="2936" height="1683" viewBox="0 0 2936 1683"><path d="M0 0 L17.23 0 A30 30 0 0 0 0 17.23 Z" fill="#000"/><path d="M17.23 0 A30 30 0 0 0 0 17.23" stroke="#5d6168" stroke-width="1.6" fill="none"/><path d="M2918.77 0 L2936 0 L2936 17.23 A30 30 0 0 0 2918.77 0 Z" fill="#000"/><path d="M2918.77 0 A30 30 0 0 1 2936 17.23" stroke="#5d6168" stroke-width="1.6" fill="none"/><path d="M0 1651.00 A52.6 52.6 0 0 0 48.40 1683 L0 1683 Z" fill="#000"/><path d="M0 1651.00 A52.6 52.6 0 0 0 48.40 1683" stroke="#4b5563" stroke-width="1.2" fill="none"/><path d="M2936 1651.00 A52.6 52.6 0 0 1 2887.60 1683 L2936 1683 Z" fill="#000"/></svg>
</div></body></html>
